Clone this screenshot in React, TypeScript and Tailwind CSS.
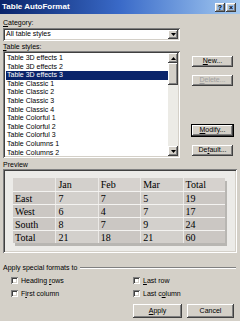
import React from 'react';

const raised =
  'shadow-[inset_-1px_-1px_#404040,inset_1px_1px_#ffffff,inset_-2px_-2px_#808080,inset_2px_2px_#d4d0c8]';
const sunken =
  'shadow-[inset_1px_1px_#808080,inset_-1px_-1px_#ffffff,inset_2px_2px_#404040,inset_-2px_-2px_#d4d0c8]';

const tableStyles = [
  'Table 3D effects 1',
  'Table 3D effects 2',
  'Table 3D effects 3',
  'Table Classic 1',
  'Table Classic 2',
  'Table Classic 3',
  'Table Classic 4',
  'Table Colorful 1',
  'Table Colorful 2',
  'Table Colorful 3',
  'Table Columns 1',
  'Table Columns 2',
];

const previewRows = [
  ['', 'Jan', 'Feb', 'Mar', 'Total'],
  ['East', '7', '7', '5', '19'],
  ['West', '6', '4', '7', '17'],
  ['South', '8', '7', '9', '24'],
  ['Total', '21', '18', '21', '60'],
];

function Arrow({ up }: { up?: boolean }) {
  return (
    <svg width="5" height="3" viewBox="0 0 5 3" className={up ? 'rotate-180' : ''}>
      <path d="M0 0h5L2.5 3z" fill="#000" />
    </svg>
  );
}

function Btn({ children, disabled, focused, className = '' }: { children: React.ReactNode; disabled?: boolean; focused?: boolean; className?: string }) {
  return (
    <div
      className={`flex items-center justify-center h-[11px] text-[7px] ${raised} ${
        focused ? 'outline outline-1 outline-black' : ''
      } ${disabled ? 'text-[#a0a0a0]' : 'text-black'} ${className}`}
    >
      {children}
    </div>
  );
}

function Check({ label }: { label: React.ReactNode }) {
  return (
    <div className="flex items-center h-[9px] gap-[3px]">
      <div className={`w-[7px] h-[7px] bg-white ${sunken}`} />
      <span className="text-[7px] leading-[9px]">{label}</span>
    </div>
  );
}

export default function App() {
  return (
    <div
      className="w-[240px] h-[321px] bg-[#d4d0c8] flex flex-col overflow-hidden text-black"
      style={{ fontFamily: '"Liberation Sans", Arial, sans-serif' }}
    >
      {/* title bar */}
      <div className="h-[14px] flex items-center pl-[2px] pr-[4px] bg-gradient-to-r from-[#0a246a] via-[#3a6ac8] to-[#a6caf0]">
        <span className="text-white font-bold text-[8px] leading-none">Table AutoFormat</span>
        <div className="ml-auto flex gap-[1px]">
          <div className={`w-[10px] h-[9px] flex items-center justify-center text-[7px] font-bold leading-none ${raised}`}>?</div>
          <div className={`w-[10px] h-[9px] flex items-center justify-center text-[7px] font-bold leading-none ${raised}`}>×</div>
        </div>
      </div>

      <div className="flex flex-col px-[3px]">
        <div className="mt-[4px] h-[9px] text-[7px] leading-[9px]">
          <u>C</u>ategory:
        </div>
        <div className={`mt-[1px] h-[13px] w-[177px] bg-white flex items-center pl-[3px] pr-[2px] ${sunken}`}>
          <span className="text-[7px]">All table styles</span>
          <div className={`ml-auto w-[10px] h-[9px] bg-[#d4d0c8] flex items-center justify-center ${raised}`}>
            <Arrow />
          </div>
        </div>

        <div className="mt-[2px] h-[8px] text-[7px] leading-[8px]">
          <u>T</u>able styles:
        </div>
        <div className="flex h-[107px]">
          <div className={`w-[177px] h-full bg-white flex p-[2px] ${sunken}`}>
            <div className="flex-1 flex flex-col pt-[1px] pl-[1px]">
              {tableStyles.map((s, i) => (
                <div
                  key={s}
                  className={`h-[8.6px] leading-[8.6px] text-[7px] pl-[1px] whitespace-nowrap ${
                    i === 2 ? 'bg-[#0a246a] text-white' : ''
                  }`}
                >
                  {s}
                </div>
              ))}
            </div>
            <div className="w-[10px] flex flex-col bg-[#ecebe6]">
              <div className={`h-[10px] bg-[#d4d0c8] flex items-center justify-center ${raised}`}>
                <Arrow up />
              </div>
              <div className={`h-[22px] bg-[#d4d0c8] ${raised}`} />
              <div className="flex-1" />
              <div className={`h-[10px] bg-[#d4d0c8] flex items-center justify-center ${raised}`}>
                <Arrow />
              </div>
            </div>
          </div>
          <div className="ml-[12px] w-[41px] flex flex-col">
            <Btn className="mt-[5px]">
              <span>
                <u>N</u>ew...
              </span>
            </Btn>
            <Btn className="mt-[8px]" disabled>
              <span>
                <u>D</u>elete...
              </span>
            </Btn>
            <Btn className="mt-[39px]" focused>
              <span>
                <u>M</u>odify...
              </span>
            </Btn>
            <Btn className="mt-[9px]">
              <span>
                De<u>f</u>ault...
              </span>
            </Btn>
          </div>
        </div>

        <div className="mt-[2px] h-[9px] text-[7px] leading-[9px]">Preview</div>
        <div className={`h-[84px] w-[234px] bg-[#ecebe8] pt-[9px] pl-[10px] ${sunken}`}>
          <div
            className="w-[212px] shadow-[2px_3px_0_#b8b6b2]"
            style={{ fontFamily: '"Liberation Serif", "Times New Roman", serif' }}
          >
            {previewRows.map((r, ri) => (
              <div
                key={ri}
                className={`flex h-[13px] ${ri === 0 ? 'bg-[#d6d2ce]' : 'bg-[#cbc7c3]'} ${
                  ri > 0 ? 'border-t border-[#f4f3f1]' : ''
                }`}
              >
                {r.map((c, ci) => (
                  <div
                    key={ci}
                    className={`w-[42.4px] text-[10px] leading-[13px] pl-[2px] ${
                      ci > 0 ? 'border-l border-[#ebe9e6]' : ''
                    } ${ci === 1 || ci === 3 ? 'bg-[#d3d0cc]' : ''}`}
                  >
                    {c}
                  </div>
                ))}
              </div>
            ))}
          </div>
        </div>

        <div className="mt-[10px] h-[9px] flex items-center">
          <span className="text-[7px] leading-[9px] whitespace-nowrap">Apply special formats to</span>
          <div className="flex-1 ml-[3px] mr-[1px] h-[2px] border-t border-[#808080] border-b border-b-white" />
        </div>
        <div className="grid grid-cols-[122px_1fr] pl-[8px] mt-[4px] gap-y-[4px]">
          <Check label={<>Heading <u>r</u>ows</>} />
          <Check label={<><u>L</u>ast row</>} />
          <Check label={<>F<u>i</u>rst column</>} />
          <Check label={<>Last c<u>o</u>lumn</>} />
        </div>
        <div className="mt-[6px] flex justify-end gap-[5px] pr-[3px]">
          <div className={`w-[49px] h-[14px] flex items-center justify-center text-[7px] ${raised}`}>
            <span>
              <u>A</u>pply
            </span>
          </div>
          <div className={`w-[47px] h-[14px] flex items-center justify-center text-[7px] ${raised}`}>Cancel</div>
        </div>
      </div>
    </div>
  );
}
